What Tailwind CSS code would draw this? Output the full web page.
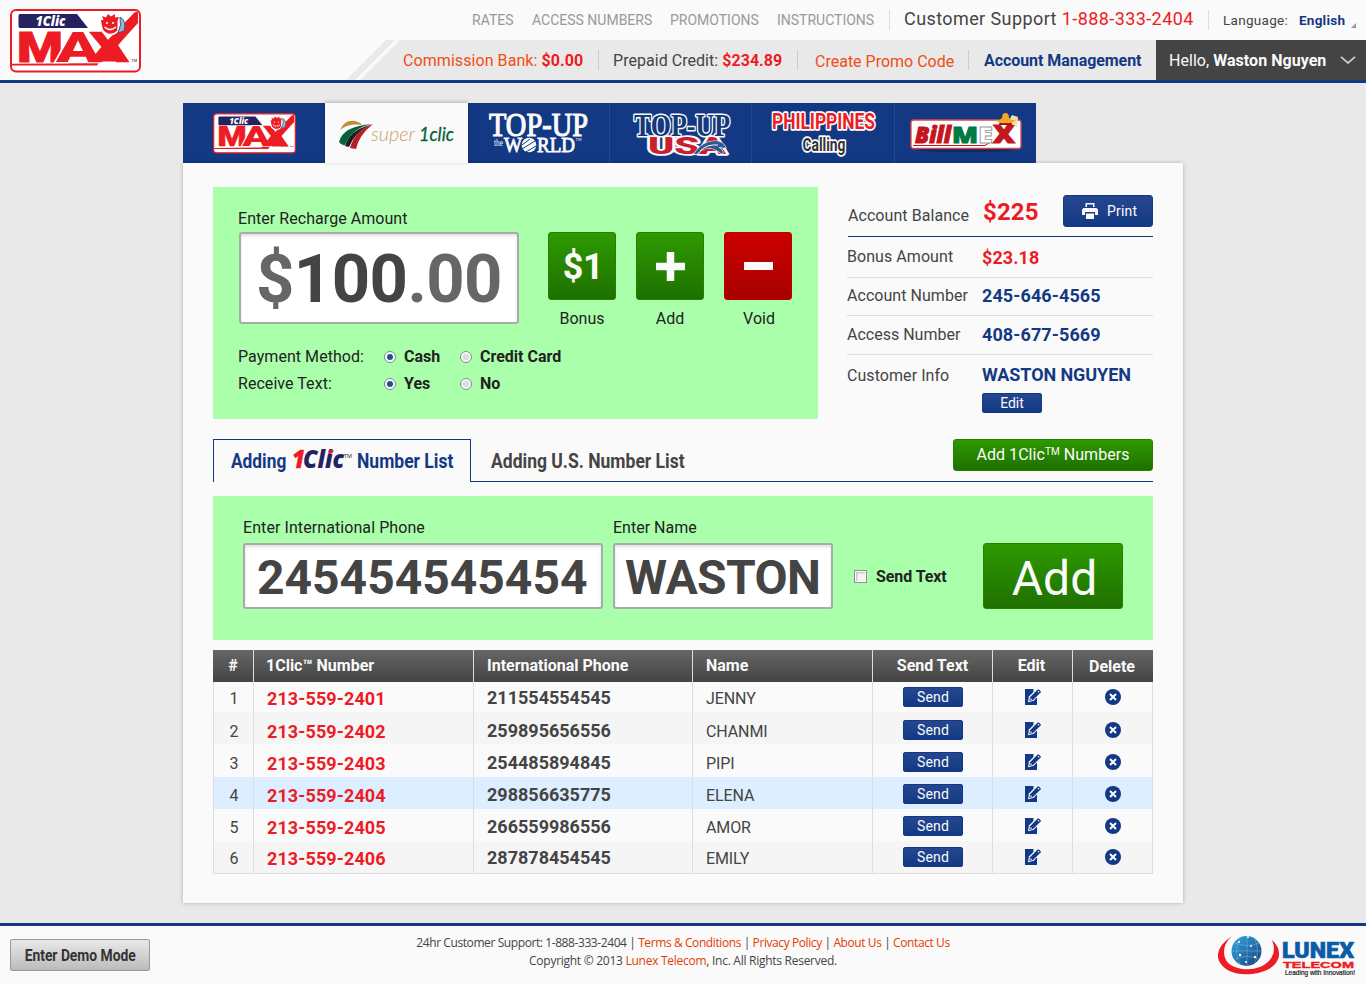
<!DOCTYPE html>
<html lang="en">
<head>
<meta charset="utf-8">
<title>1Clic MAX</title>
<script src="https://cdn.jsdelivr.net/npm/@tailwindcss/browser@4"></script>
</head>
<body class="w-[1366px] h-[984px] overflow-hidden bg-[#e9e9e9] font-['Roboto',sans-serif] text-base leading-5 text-[#444] whitespace-nowrap flex flex-col">

<svg width="0" height="0" class="absolute">
  <defs>
    <linearGradient id="globe" x1="0" y1="0" x2="1" y2="1"><stop offset="0" stop-color="#2fa8e0"/><stop offset="1" stop-color="#1b3f7d"/></linearGradient>
    <symbol id="max" viewBox="0 0 131 64">
      <rect x="1" y="1" width="129" height="61.5" rx="5" fill="#fff" stroke="#ed1c24" stroke-width="2"/>
      <path d="M10 5H67L78 19H10Q8.500 19 8.500 17V7Q8.500 5 10 5Z" fill="#262262"/>
      <text x="25.500" y="17" font-family="Open Sans" font-weight="800" font-style="italic" font-size="14.500" fill="#fff" textLength="30" lengthAdjust="spacingAndGlyphs">1Clic</text>
      <path d="M2 54.800L76 54.200L88 43L92 52.500H119L108 36L128 14V3Q125 2 122 6L93 36L98 42L87 56.500H2Z" fill="#ed1c24"/>
      <text x="7" y="52.500" font-family="Roboto" font-weight="900" font-size="43" fill="#ed1c24" stroke="#ed1c24" stroke-width="1" textLength="46" lengthAdjust="spacingAndGlyphs">M</text>
      <text x="46" y="52.500" font-family="Roboto" font-weight="900" font-size="43" fill="#ed1c24" stroke="#fff" stroke-width="2.500" paint-order="stroke" textLength="44" lengthAdjust="spacingAndGlyphs">A</text>
      <text x="79" y="52.500" font-family="Roboto" font-weight="900" font-size="43" fill="#ed1c24" stroke="#ed1c24" stroke-width=".5" textLength="40" lengthAdjust="spacingAndGlyphs">X</text>
      <circle cx="100" cy="16" r="10.500" fill="#fff"/>
      <path d="M92 17L91 11L93.500 11L92 7L96 8.500L98 5L101 7.500L105 5L105 8.500L109 8L107.500 12L107.500 19Q107 24 100 24Q93 24 92 17Z" fill="#ed1c24"/>
      <path d="M94 20Q99 28 107 21" fill="none" stroke="#ed1c24" stroke-width="1.200"/>
      <circle cx="97" cy="14" r="1.100" fill="#fff"/><circle cx="103" cy="14" r="1.100" fill="#fff"/>
      <path d="M94.500 18Q100 23 106 18" fill="none" stroke="#fff" stroke-width="1.300"/>
      <path d="M110 8Q117 12 114 22L108 24Q112 16 110 8Z" fill="#9fb0c4" stroke="#345a8a" stroke-width="1"/>
      <text x="121" y="53" font-family="Roboto" font-size="4" fill="#222">TM</text>
    </symbol>
    <symbol id="edit" viewBox="0 0 16 16">
      <path d="M0 0H8.500V3L12 9V16H0Z" fill="#133984"/>
      <path d="M3 13.200L3.900 7.600L10.500 1H13L15 5L8.800 11.700Z" fill="#fff"/>
      <path d="M4.200 11.900L5 8.300L12.400 .8Q13.300 0 14.200 .8L15.400 2Q16.300 2.900 15.400 3.800L8 11.100Z" fill="#133984"/>
      <circle cx="13.500" cy="2.700" r=".8" fill="#fff"/><path d="M5.200 11L5.700 9L7.200 10.500Z" fill="#fff"/>
    </symbol>
    <symbol id="del" viewBox="0 0 16 16"><circle cx="8" cy="8" r="8" fill="#133984"/><path d="M5 5L11 11M11 5L5 11" stroke="#fff" stroke-width="2"/></symbol>
  </defs>
</svg>

<header class="h-[83px] shrink-0 bg-[#fafafa] border-b-3 border-[#133984] flex justify-between">
  <svg class="w-[131px] h-[64px] ml-[10px] mt-[9px]"><use href="#max"/></svg>
  <div class="flex flex-col items-end">
    <div class="h-10 w-[894px] flex items-center text-sm text-[#999]">
      <a class="w-[60px]">RATES</a><a class="w-[138px]">ACCESS NUMBERS</a><a class="w-[107px]">PROMOTIONS</a><a class="w-[112px]">INSTRUCTIONS</a>
      <div class="w-px h-5 bg-[#ddd]"></div>
      <div class="w-[304px] ml-[14px] text-lg leading-5 text-[#444] tracking-[.41px] pb-0.5">Customer Support <span class="text-[#ed1c24]">1-888-333-2404</span></div>
      <div class="w-px h-5 bg-[#ddd]"></div>
      <div class="w-[76px] ml-[14px] pt-px text-[#444] text-[13.500px] tracking-[.3px]">Language:</div>
      <div class="w-[52px] pt-px text-[#133984] font-bold text-[13.500px] tracking-[.25px]">English</div>
      <svg class="size-[5px] mt-[11px]" viewBox="0 0 5 5"><path d="M5 0V5H0Z" fill="#999"/></svg>
    </div>
    <div class="h-10 flex">
      <svg class="w-[54px] h-10" viewBox="0 0 54 40"><path d="M0 40L40 0H49L9 40ZM14 40L54 0V40Z" fill="#e9e9e9"/></svg>
      <div class="w-[756px] bg-[#e9e9e9] flex items-center">
        <div class="w-[195px] ml-[3px] pt-0.5 tracking-[.07px] text-[#f04e16]">Commission Bank: <b class="text-[#ed1c24]">$0.00</b></div>
        <div class="w-px h-5 bg-[#ccc]"></div>
        <div class="w-[184px] ml-[14px] pt-0.5 tracking-[.04px]">Prepaid Credit: <b class="text-[#ed1c24]">$234.89</b></div>
        <div class="w-px h-5 bg-[#ccc]"></div>
        <div class="w-[153px] ml-[17px] text-[#f04e16] pt-1">Create Promo Code</div>
        <div class="w-px h-5 bg-[#ccc]"></div>
        <div class="ml-[15px] pt-0.5 tracking-[-.06px] text-[#133984] font-bold">Account Management</div>
      </div>
      <div class="w-[210px] bg-[#444] text-[#fafafa] flex items-center pl-[13px]">
        <div class="w-[171px] pt-0.5 tracking-[.04px]">Hello, <b>Waston Nguyen</b></div>
        <svg class="w-4 h-2" viewBox="0 0 16 8"><path d="M1 .8L8 7L15 .8" fill="none" stroke="#ccc" stroke-width="1.700"/></svg>
      </div>
    </div>
  </div>
</header>

<main class="w-[1000px] mx-auto mt-5 h-[820px] shrink-0">
  <nav class="flex w-[853px] h-[60px] bg-[#133984]">
    <div class="w-[142px]"><svg class="w-[83px] h-[41px] ml-[30px] mt-[10px]"><use href="#max"/></svg></div>
    <div class="w-[143px] bg-[#fafafa] shadow-[0_-1px_4px_rgba(0,0,0,.25)]">
      <svg class="w-[143px] h-[60px]" viewBox="0 0 143 60">
        <path d="M15 27Q20 16 30 18Q35 19 37 22Q24 20 15 27Z" fill="#c58a3a"/>
        <path d="M14 39Q18 23 47 21Q27 25 20 42Q17 43 14 39Z" fill="#05633a"/>
        <path d="M20 43Q25 27 45 22Q30 29 24 44Z" fill="#1c1c1c"/>
        <path d="M25 45Q30 27 48 21Q34 32 31 46Z" fill="#b2202a"/>
        <text x="46" y="38" font-family="Lato" font-weight="300" font-style="italic" font-size="20" fill="#c9a063" textLength="44" lengthAdjust="spacingAndGlyphs">super</text>
        <text x="94" y="38" font-family="Lato" font-style="italic" font-weight="400" font-size="20" fill="#05633a" stroke="#05633a" stroke-width=".3" textLength="35" lengthAdjust="spacingAndGlyphs">1clic</text>
      </svg>
    </div>
    <div class="w-[142px] border-r border-[#1f4796]">
      <svg class="w-[141px] h-[60px]" viewBox="0 0 141 60" fill="#fafafa" font-family="Liberation Serif">
        <text x="21" y="33" font-size="33" stroke="#fafafa" stroke-width="1.200" textLength="99" lengthAdjust="spacingAndGlyphs">TOP-UP</text>
        <text x="26" y="43" font-size="9.500" textLength="9" lengthAdjust="spacingAndGlyphs">the</text>
        <text x="36" y="49" font-size="22" stroke="#fafafa" stroke-width=".9" textLength="18" lengthAdjust="spacingAndGlyphs">W</text>
        <circle cx="61" cy="42" r="7.300"/>
        <path d="M54 42L62 36M54 46L67 38M58 49L68 43" stroke="#133984" stroke-width="1"/>
        <text x="69" y="49" font-size="22" stroke="#fafafa" stroke-width=".9" textLength="38" lengthAdjust="spacingAndGlyphs">RLD</text>
        <text x="107.500" y="38" font-size="4">TM</text>
      </svg>
    </div>
    <div class="w-[142px] border-r border-[#1f4796]">
      <svg class="w-[141px] h-[60px]" viewBox="0 0 141 60" stroke="#fafafa" stroke-linejoin="round" paint-order="stroke">
        <text x="38" y="50.500" font-family="Roboto" font-weight="900" font-size="23" fill="#c8202f" stroke-width="3.500" textLength="78" lengthAdjust="spacingAndGlyphs">USA</text>
        <text x="24" y="33" font-family="Liberation Serif" font-weight="700" font-size="31" fill="#133a78" stroke-width="3" textLength="96" lengthAdjust="spacingAndGlyphs">TOP-UP</text>
        <path d="M84 51Q92 38 106 38Q114 39 116 45L108 44Q115 48 112 51Q106 46 100 45Q92 45 87 51Z" fill="#2d5793" stroke-width="1.200"/>
        <path d="M90 48Q97 41 108 42" stroke-width="1" fill="none"/>
      </svg>
    </div>
    <div class="w-[143px] border-r border-[#1f4796]">
      <svg class="w-[142px] h-[60px]" viewBox="0 0 142 60" stroke="#fff" stroke-linejoin="round" paint-order="stroke" font-family="Roboto" font-weight="700">
        <text x="20" y="26" font-size="21.500" fill="#ed1c24" stroke-width="3.500" textLength="103" lengthAdjust="spacingAndGlyphs">PHILIPPINES</text>
        <text x="50.500" y="48" font-size="17.500" fill="#333" stroke-width="3.500" textLength="43" lengthAdjust="spacingAndGlyphs">Calling</text>
      </svg>
    </div>
    <div class="w-[141px]">
      <svg class="w-[141px] h-[60px]" viewBox="0 0 141 60" font-family="Open Sans" font-weight="800">
        <ellipse cx="71" cy="47" rx="48" ry="2" fill="#000" opacity=".3"/>
        <rect x="16" y="17" width="110" height="28.500" rx="2.500" fill="#fff" stroke="#d8474e" stroke-width="1.300"/>
        <path d="M18 42.500H90L97 38" stroke="#c4161c" fill="none"/>
        <text x="20" y="40" font-size="23" font-style="italic" fill="#c4161c" stroke="#c4161c" textLength="36" lengthAdjust="spacingAndGlyphs">Bill</text>
        <text x="57" y="40" font-size="23" fill="#007a45" stroke="#007a45" textLength="26" lengthAdjust="spacingAndGlyphs">M</text>
        <text x="83" y="40" font-size="23" fill="#fff" stroke="#999" stroke-width=".8" textLength="15" lengthAdjust="spacingAndGlyphs">E</text>
        <text x="98" y="40" font-size="24" fill="#c4161c" stroke="#c4161c" textLength="22" lengthAdjust="spacingAndGlyphs">X</text>
        <path d="M113 19L117 12L123 14L122 24Z" fill="#f3dfae"/>
        <path d="M105 18H116L117 22H104Z" fill="#8f1416"/>
        <path d="M99 16Q103 19 107 15Q107 10 110.500 10Q114 10 114 15Q118 19 122 16Q118 21 110.500 20Q103 21 99 16Z" fill="#f5a623"/>
      </svg>
    </div>
  </nav>

  <section class="h-[740px] bg-[#fafafa] shadow-[0_0_4px_rgba(0,0,0,.25)] px-[30px] pt-6">
    <div class="flex h-[232px]">
      <div class="w-[605px] bg-[#afa] text-[#222] px-[25px] pt-[22px]">
        <div class="flex">
          <div class="w-[310px]">
            <div class="h-5 tracking-[.05px]">Enter Recharge Amount</div>
            <div class="mt-[3px] ml-px w-[280px] h-[92px] border-2 border-[#aaa] rounded-[3px] bg-white shadow-[inset_0_2px_3px_rgba(0,0,0,.12)] flex items-center pl-[15px] pt-0.5 text-[67px] tracking-[-.6px] font-bold text-[#666]">$<span class="text-[#444]">100</span>.00</div>
          </div>
          <div class="flex gap-5 pt-[23px] text-center">
            <div><div class="size-[68px] rounded-[3px] border border-[#288000] bg-linear-to-b from-[#2e9a00] to-[#1f7000] text-[#fafafa] text-4xl font-bold tracking-[-.5px] flex items-center justify-center pl-0.5 pt-0.5">$1</div><div class="mt-[9px]">Bonus</div></div>
            <div><div class="size-[68px] rounded-[3px] border border-[#288000] bg-linear-to-b from-[#2e9a00] to-[#1f7000] flex items-center justify-center"><svg class="w-[29px] h-[29px]" viewBox="0 0 29 29"><path d="M0 14.500H29M14.500 0V29" stroke="#fafafa" stroke-width="7.500"/></svg></div><div class="mt-[9px]">Add</div></div>
            <div><div class="size-[68px] rounded-[3px] border border-[#bb0000] bg-linear-to-b from-[#cc0000] to-[#a80000] flex items-center justify-center"><div class="w-[29px] h-2 bg-[#fafafa]"></div></div><div class="mt-[9px] pl-0.5">Void</div></div>
          </div>
        </div>
        <div class="mt-[18px] grid grid-cols-[146px_20px_56px_20px_120px] gap-y-[7px] items-center">
          <div class="tracking-[.05px]">Payment Method:</div>
          <span class="size-3 rounded-full border border-[#7f868c] bg-white flex items-center justify-center"><span class="size-1.5 rounded-full bg-[#0f5a8c]"></span></span><b>Cash</b>
          <span class="size-3 rounded-full border border-[#8a8f94] bg-[#dcdfe2] shadow-[inset_0_0_0_1.500px_#fff]"></span><b>Credit Card</b>
          <div class="tracking-[.05px]">Receive Text:</div>
          <span class="size-3 rounded-full border border-[#7f868c] bg-white flex items-center justify-center"><span class="size-1.5 rounded-full bg-[#0f5a8c]"></span></span><b>Yes</b>
          <span class="size-3 rounded-full border border-[#8a8f94] bg-[#dcdfe2] shadow-[inset_0_0_0_1.500px_#fff]"></span><b>No</b>
        </div>
      </div>
      <div class="ml-[29px] w-[306px]">
        <div class="h-[50px] ml-px border-b border-[#133984] flex pt-2">
          <div class="w-[135px] pt-[11px] tracking-[.06px]">Account Balance</div>
          <div class="w-[80px] pt-px text-2xl leading-8 font-bold tracking-[.15px] text-[#ed1c24]">$225</div>
          <div class="w-[90px] h-8 rounded-[3px] border border-[#133984] bg-linear-to-b from-[#26478f] to-[#133984] text-[#fafafa] text-sm flex items-center pl-[18px] gap-[9px]">
            <svg class="size-4" viewBox="0 0 16 16"><path d="M3.500 0H12.500V4H11V1.500H5V4H3.500ZM1.500 5H14.500L16 6.500V12H13V9H3V12H0V6.500ZM4 10.500H12V16H4Z" fill="#fafafa"/></svg><span class="tracking-[.2px]">Print</span></div>
        </div>
        <div class="h-[41px] flex border-b border-[#ddd] pt-[10px]"><div class="w-[135px] tracking-[.06px]">Bonus Amount</div><b class="text-lg leading-5 text-[#ed1c24] mt-px tracking-[.1px]">$23.18</b></div>
        <div class="h-[38px] flex border-b border-[#ddd] pt-[8px]"><div class="w-[135px] tracking-[.04px]">Account Number</div><b class="text-lg leading-5 text-[#133984] tracking-[.1px]">245-646-4565</b></div>
        <div class="h-[39px] flex border-b border-[#ddd] pt-[9px]"><div class="w-[135px]">Access Number</div><b class="text-lg leading-5 text-[#133984] tracking-[.1px]">408-677-5669</b></div>
        <div class="flex pt-[10px]"><div class="w-[135px] pt-px tracking-[.06px]">Customer Info</div><div><b class="text-lg leading-5 block text-[#133984] tracking-[-.08px]">WASTON NGUYEN</b>
          <div class="mt-[8px] w-[60px] h-5 rounded-[2px] border border-[#133984] bg-linear-to-b from-[#26478f] to-[#133984] text-[#fafafa] text-sm leading-[19px] text-center">Edit</div></div></div>
      </div>
    </div>

    <div class="mt-5 h-[43px] flex">
      <div class="w-[258px] border border-b-0 border-[#133984] pl-[17px] pt-[11px] text-xl leading-5 font-bold text-[#133984] flex">
        <span class="w-[62px]"><span class="inline-block origin-left scale-x-[.865]">Adding</span></span>
        <svg class="w-[64px] h-6 -mt-1 overflow-visible" viewBox="0 0 64 24" font-family="Open Sans" font-weight="800" font-style="italic" font-size="24"><text x="-1" y="21" fill="#ed1c24" stroke="#ed1c24" stroke-width=".5" textLength="13" lengthAdjust="spacingAndGlyphs">1</text><text x="10" y="21" fill="#262262" textLength="41" lengthAdjust="spacingAndGlyphs">Clic</text><path d="M35 7L37 3H40.500L38 7Z" fill="#ed1c24"/><text x="51" y="11" font-size="6" font-style="normal" font-weight="400" fill="#222" textLength="8" lengthAdjust="spacingAndGlyphs">TM</text></svg>
        <span class="inline-block origin-left scale-x-[.875]">Number List</span>
      </div>
      <div class="flex-1 border-b border-[#133984] flex justify-between pl-5">
        <div class="pt-3 text-xl leading-5 font-bold"><span class="inline-block origin-left scale-x-[.876]">Adding U.S. Number List</span></div>
        <div class="w-[200px] h-8 rounded-[3px] border border-[#288000] bg-linear-to-b from-[#2e9a00] to-[#1f7000] text-[#fafafa] tracking-[.05px] leading-[29px] text-center">Add 1Clic<span class="text-[10px] leading-none align-[5px]">TM</span> Numbers</div>
      </div>
    </div>

    <div class="mt-[14px] h-[144px] bg-[#afa] text-[#222] px-[30px] pt-[22px] flex">
      <div class="w-[370px]"><div class="tracking-[.08px]">Enter International Phone</div><div class="mt-[5px] w-[360px] h-[66px] border-2 border-[#aaa] rounded-[3px] bg-white shadow-[inset_0_2px_3px_rgba(0,0,0,.12)] flex items-center pl-3 pt-[3px] text-5xl font-bold text-[#444]">245454545454</div></div>
      <div class="w-[241px]"><div>Enter Name</div><div class="mt-[5px] w-[220px] h-[66px] border-2 border-[#aaa] rounded-[3px] bg-white shadow-[inset_0_2px_3px_rgba(0,0,0,.12)] flex items-center pl-[10px] pt-[3px] text-5xl font-bold tracking-[-.6px] text-[#444]">WASTON</div></div>
      <div class="w-[129px] h-[66px] mt-[25px] flex items-center gap-[9px]"><span class="size-[13px] border border-[#8e8f8f] bg-[#f4f4f4] shadow-[inset_0_0_0_1px_#fff,inset_2px_2px_2px_#bbb]"></span><b class="pt-0.5 tracking-[-.08px]">Send Text</b></div>
      <div class="w-[140px] h-[66px] mt-[25px] rounded-[3px] border border-[#288000] bg-linear-to-b from-[#2e9a00] to-[#1f7000] text-[#fafafa] text-5xl leading-[70px] text-center pl-[3px]">Add</div>
    </div>

    <div class="mt-2.5">
      <div class="h-8 bg-linear-to-b from-[#666] to-[#444] text-[#fafafa] font-bold grid grid-cols-[41px_220px_219px_180px_120px_80px_80px] leading-[31px] divide-x divide-[#ddd]">
        <div class="text-center">#</div><div class="pl-3">1Clic™ Number</div><div class="pl-[13px]">International Phone</div><div class="pl-[13px]">Name</div><div class="text-center">Send Text</div><div class="text-center pr-0.5">Edit</div><div class="text-center pt-px pr-0.5">Delete</div>
      </div>
      <div id="rows" class="border border-t-0 border-[#ddd]"></div>
    </div>
  </section>
</main>

<footer class="h-[61px] shrink-0 bg-[#fafafa] border-t-3 border-[#133984] flex">
  <div class="w-[200px] pl-2.5 pt-[13px]"><div class="w-[140px] h-8 rounded-[2px] border border-[#999] bg-linear-to-b from-[#e9e9e9] to-[#bbb] flex items-center justify-center font-bold text-[#333] pt-0.5"><span class="inline-block scale-x-[.865]">Enter Demo Mode</span></div></div>
  <div class="flex-1 pt-2 text-center font-['Open_Sans',sans-serif] text-xs leading-[18px]">
    <div class="tracking-[-.41px]">24hr Customer Support: 1-888-333-2404 | <span class="text-[#e63c00]">Terms &amp; Conditions</span> | <span class="text-[#e63c00]">Privacy Policy</span> | <span class="text-[#e63c00]">About Us</span> | <span class="text-[#e63c00]">Contact Us</span></div>
    <div class="tracking-[-.27px]">Copyright © 2013 <span class="text-[#e63c00]">Lunex Telecom</span>, Inc. All Rights Reserved.</div>
  </div>
  <div class="w-[200px] flex justify-end">
    <svg class="w-[148px] h-[58px]" viewBox="0 0 148 58">
      <path d="M14 10Q-4 22 1 35Q9 50 34 48Q56 45 60.500 32Q63 22 54 14Q59 26 51 35Q41 45 24 43Q6 40 6 26Q6 17 14 10Z" fill="#ed1c24"/>
      <circle cx="28.500" cy="25" r="15" fill="url(#globe)"/>
      <path d="M14 25H44M17 17Q29 22 41 17M17 33Q29 28 41 33M29 10V40M22 11Q15 25 22 39M36 11Q43 25 36 39" stroke="#8fc4ea" stroke-width=".4" fill="none"/>
      <g fill="#fff"><circle cx="30" cy="11" r="1"/><circle cx="21" cy="16" r="1"/><circle cx="33" cy="20" r="1"/><circle cx="22" cy="29" r="1.200"/><circle cx="37" cy="31" r="1.200"/><circle cx="28" cy="36" r="1"/></g>
      <text x="64" y="31.500" font-family="Roboto" font-weight="900" font-size="22" fill="#0a5ba8" stroke="#0a5ba8" stroke-width=".6" textLength="72" lengthAdjust="spacingAndGlyphs">LUNEX</text>
      <text x="65" y="42" font-family="Liberation Sans" font-weight="700" font-size="9" fill="#ed1c24" stroke="#ed1c24" stroke-width=".4" textLength="71" lengthAdjust="spacingAndGlyphs">TELECOM</text>
      <text x="67" y="48.500" font-family="Liberation Sans" font-size="6.500" fill="#222" stroke="#222" stroke-width=".2" textLength="70" lengthAdjust="spacingAndGlyphs">Leading with Innovation!</text>
    </svg>
  </div>
</footer>

<script>
  // Table rows: height, top padding and stripe colour of each row, then its cells
  const rows = [
    ['h-[30px] pt-[5px]', '213-559-2401', '211554554545', 'JENNY'],
    ['h-[32px] pt-[8px] bg-[#f5f5f5]', '213-559-2402', '259895656556', 'CHANMI'],
    ['h-[33px] pt-[8px]', '213-559-2403', '254485894845', 'PIPI'],
    ['h-[32px] pt-[7px] bg-[#dceeff]', '213-559-2404', '298856635775', 'ELENA'],
    ['h-[32px] pt-[7px]', '213-559-2405', '266559986556', 'AMOR'],
    ['h-[32px] pt-[6px] bg-[#f5f5f5]', '213-559-2406', '287878454545', 'EMILY']
  ];
  document.getElementById('rows').innerHTML =
    '<div class="relative">' +
    rows.map((r, i) => `<div class="${r[0]} grid grid-cols-[40px_220px_219px_180px_120px_80px_79px] leading-5">
      <div class="text-center pt-[1.500px]">${i + 1}</div>
      <b class="pl-[13px] pt-[2px] text-lg leading-5 tracking-[.1px] text-[#ed1c24]">${r[1]}</b>
      <b class="pl-[13px] pt-px text-lg leading-5">${r[2]}</b>
      <div class="pl-[13px] pt-[2px] tracking-[-.1px]">${r[3]}</div>
      <div class="flex justify-center"><div class="w-[60px] h-5 rounded-[2px] border border-[#133984] bg-linear-to-b from-[#26478f] to-[#133984] text-[#fafafa] text-sm leading-[19px] text-center tracking-[.2px]">Send</div></div>
      <svg class="size-4 mx-auto mt-0.5"><use href="#edit"/></svg>
      <svg class="size-4 mx-auto mt-0.5"><use href="#del"/></svg>
    </div>`).join('') +
    '<div class="absolute inset-0 grid grid-cols-[40px_220px_219px_180px_120px_80px_79px] divide-x divide-[#ddd]"><i></i><i></i><i></i><i></i><i></i><i></i><i></i></div></div>';
</script>
</body>
</html>
